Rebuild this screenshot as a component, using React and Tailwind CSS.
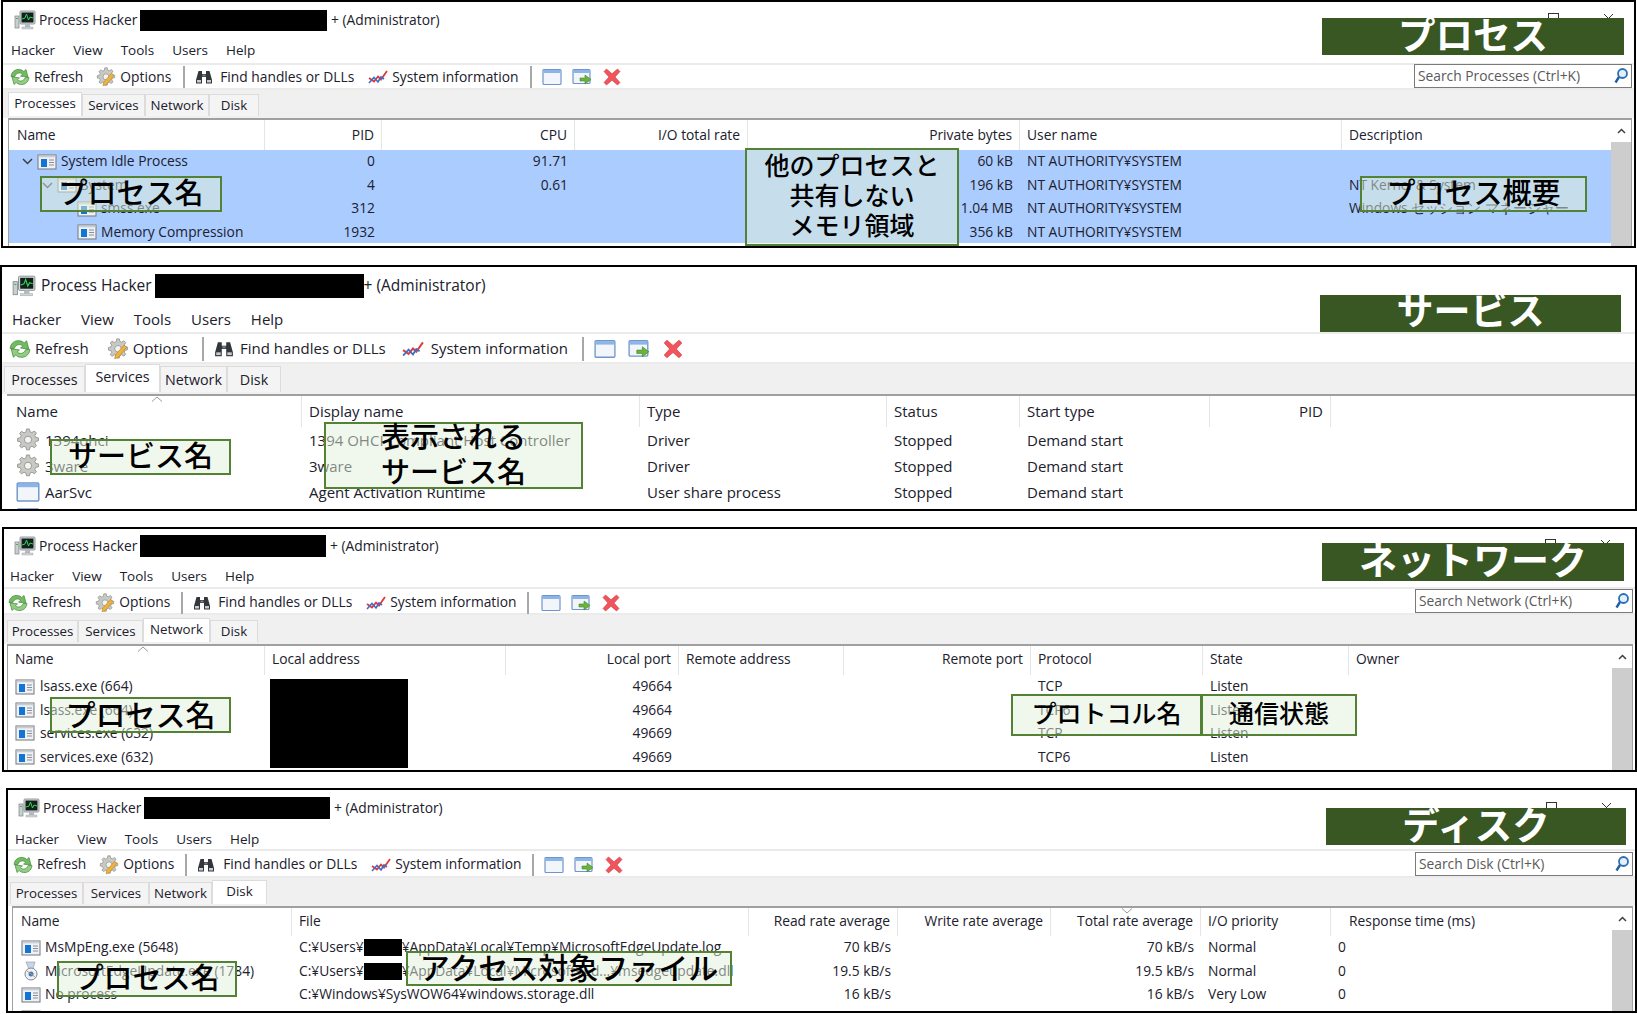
import React from "react";

const Logo = ({ s = 22 }) => (
  <svg width={s} height={s} viewBox="0 0 22 22" className="shrink-0">
    <rect x="1" y="7" width="4" height="12" fill="#c9ced0" stroke="#7d8486" strokeWidth="0.7" />
    <rect x="2" y="9" width="2" height="1" fill="#4caf50" />
    <rect x="6" y="2" width="15" height="13" rx="1" fill="#d7dcde" stroke="#7f8789" strokeWidth="0.8" />
    <rect x="7.5" y="3.5" width="12" height="10" fill="#14201c" />
    <path d="M8 10l3-1 1.5-4 2 6 1.5-3 3 1" fill="none" stroke="#35d45a" strokeWidth="1" />
    <rect x="11" y="15" width="5" height="3" fill="#b5babc" />
    <rect x="8" y="18" width="11" height="2" fill="#d0d4d6" stroke="#9a9fa1" strokeWidth="0.4" />
  </svg>
);

const Refresh = ({ s = 20 }) => (
  <svg width={s} height={s} viewBox="0 0 20 20" className="shrink-0">
    <path d="M1 9.500C1.500 4.500 5.500 2 9.500 2.500c2 .2 3.300 1 4.300 2L16 2.500l2 7.500-7.500-.8 2-2C11 5.500 6.500 5 4.800 9.500z" fill="#74ba60" stroke="#3f8a3c" strokeWidth="0.7" />
    <path d="M19 10.500c-.5 5-4.500 7.500-8.500 7-2-.2-3.300-1-4.300-2L4 17.500 2 10l7.500.8-2 2c1.500 1.700 6 2.200 7.700-2.300z" fill="#93cd80" stroke="#3f8a3c" strokeWidth="0.7" />
  </svg>
);

const GearShape = () => (
  <g>
    <path
      d="M8.800.8h2.400l.5 2.300 1.600.7 2-1.300 1.700 1.700-1.300 2 .7 1.600 2.300.5v2.400l-2.300.5-.7 1.600 1.300 2-1.700 1.700-2-1.300-1.600.7-.5 2.300H8.800l-.5-2.300-1.600-.7-2 1.300L3 15.100l1.300-2-.7-1.600-2.300-.5V8.600l2.300-.5.7-1.600-1.300-2L4.700 2.800l2 1.300 1.600-.7z"
      fill="#c8c8c4"
      stroke="#8e8e88"
      strokeWidth="0.7"
    />
    <circle cx="10" cy="9.800" r="3" fill="#f4f4f2" stroke="#8e8e88" strokeWidth="0.7" />
  </g>
);

const Options = ({ s = 20 }) => (
  <svg width={s} height={s} viewBox="0 0 20 20" className="shrink-0">
    <GearShape />
    <path d="M15.500 6.500l2.500 1.800-7.500 9.200-3.500 1.300.6-3.500z" fill="#eeb23e" stroke="#bd8320" strokeWidth="0.6" />
  </svg>
);

const ServiceGear = ({ s = 24 }) => (
  <svg width={s} height={s} viewBox="0 0 20 20" className="shrink-0">
    <GearShape />
  </svg>
);

const Binoculars = ({ s = 18 }) => (
  <svg width={s} height={s} viewBox="0 0 18 18" className="shrink-0">
    <path d="M3.500 3h3.500v3h4V3h3.500l2.500 9v3.500h-6V9H7v6.500H1V12z" fill="#33373c" />
    <rect x="2" y="12" width="4" height="2.500" fill="#c7ccd0" />
    <rect x="12" y="12" width="4" height="2.500" fill="#c7ccd0" />
    <rect x="7.500" y="6.500" width="3" height="2" fill="#7b8086" />
  </svg>
);

const Chart = ({ s = 20 }) => (
  <svg width={s} height={s} viewBox="0 0 20 20" className="shrink-0">
    <path d="M1 11l5 3.500 4-5 3 3L19 4" fill="none" stroke="#e53935" strokeWidth="1.800" />
    <path d="M1 16l5-5.500 4 4.500 3-5 3 2" fill="none" stroke="#3f6fc4" strokeWidth="1.600" />
  </svg>
);

const Win = ({ s = 20 }) => (
  <svg width={s} height={s} viewBox="0 0 20 20" className="shrink-0">
    <rect x="1" y="2.500" width="18" height="15" rx="1" fill="#f2f6fb" stroke="#6f96cc" strokeWidth="1.200" />
    <rect x="1.500" y="3" width="17" height="3" fill="#8db4e6" />
  </svg>
);

const WinArrow = ({ s = 20 }) => (
  <svg width={s} height={s} viewBox="0 0 20 20" className="shrink-0">
    <rect x="1" y="2.500" width="17" height="14" rx="1" fill="#f2f6fb" stroke="#6f96cc" strokeWidth="1.200" />
    <rect x="1.500" y="3" width="16" height="3" fill="#8db4e6" />
    <path d="M8 11h5V8l6 4.500-6 4.500v-3H8z" fill="#6cb23c" stroke="#3f8a25" strokeWidth="0.6" />
  </svg>
);

const Close = ({ s = 20 }) => (
  <svg width={s} height={s} viewBox="0 0 20 20" className="shrink-0">
    <path d="M2 4.500L4.500 2 10 6.800 15.500 2 18 4.500 13 10l5 5.500-2.500 2.500L10 13.200 4.500 18 2 15.500 7 10z" fill="#f0545c" stroke="#d9363e" strokeWidth="0.6" />
  </svg>
);

const Search = () => (
  <svg width="16" height="18" viewBox="0 0 16 18" className="shrink-0">
    <circle cx="9.500" cy="6.500" r="4.500" fill="#e3f0fb" stroke="#2a6fb5" strokeWidth="1.800" />
    <path d="M6 10l-3.500 5.500" stroke="#1d5f9f" strokeWidth="2.400" />
  </svg>
);

const Proc = ({ s = 20 }) => (
  <svg width={s} height={s} viewBox="0 0 20 20" className="shrink-0">
    <rect x="1" y="3" width="18" height="14" fill="#eef1f5" stroke="#7d8085" strokeWidth="1.100" />
    <rect x="1.500" y="3.500" width="17" height="1.800" fill="#c9cdd2" />
    <rect x="4" y="7" width="6" height="8" fill="#1474d4" />
    <path d="M12 8h5M12 10.500h5M12 13h5" stroke="#8b8f95" strokeWidth="1" />
  </svg>
);

const Installer = ({ s = 20 }) => (
  <svg width={s} height={s} viewBox="0 0 20 20" className="shrink-0">
    <path d="M5 1h9l-2 7h-4z" fill="#c9d5e6" stroke="#8a95a5" strokeWidth="0.6" />
    <circle cx="10" cy="13" r="6" fill="#eef2f8" stroke="#7d8899" strokeWidth="1" />
    <circle cx="10" cy="13" r="2.500" fill="#3b78d0" />
    <path d="M6 10l8 6" stroke="#d99a2b" strokeWidth="1" />
  </svg>
);

const Chevron = ({ className }) => (
  <svg width="11" height="7" viewBox="0 0 11 7" className={className}>
    <path d="M1 1l4.500 4.500L10 1" fill="none" stroke="#3d3d3d" strokeWidth="1.500" />
  </svg>
);

const SortUp = ({ className }) => (
  <svg width="12" height="6" viewBox="0 0 12 6" className={className}>
    <path d="M1 5.500L6 1l5 4.500" fill="none" stroke="#9a9a9a" strokeWidth="1" />
  </svg>
);

const Scrollbar = () => (
  <div className="w-[20px] shrink-0 flex flex-col">
    <div className="h-[22px] flex items-center justify-center bg-white">
      <svg width="9" height="6" viewBox="0 0 9 6">
        <path d="M1 5l3.500-3.500L8 5" fill="none" stroke="#404040" strokeWidth="1.500" />
      </svg>
    </div>
    <div className="flex-1 bg-[#cdcdcd]" />
  </div>
);

const Note = ({ className, children }) => (
  <div
    className={`absolute flex flex-col items-center justify-center text-center border-2 border-[#548235] bg-[#e2efd9]/50 text-black font-medium leading-none pb-[5px] whitespace-nowrap font-['Noto_Sans_CJK_JP',sans-serif] ${className}`}
  >
    {children}
  </div>
);

const Heading = ({ className, children }) => (
  <div
    className={`absolute flex items-center justify-center bg-[#385723] text-white font-bold leading-none pb-[8px] whitespace-nowrap font-['Noto_Sans_CJK_JP',sans-serif] ${className}`}
  >
    {children}
  </div>
);

const TABS = ["Processes", "Services", "Network", "Disk"];

function Panel({ p }) {
  const bodyRight = p.rightBody || p.right;
  return (
    <section className={`relative border-2 border-black bg-white flex flex-col overflow-hidden text-[#20202c] font-['Open_Sans',sans-serif] ${p.shell} ${p.text}`}>
      <div className={`flex items-center shrink-0 ${p.titleRow}`}>
        <Logo s={p.logo} />
        <span className={p.titleName}>Process Hacker</span>
        <span className={`bg-black shrink-0 ${p.redact}`} />
        <span className="whitespace-pre">{p.titleTail}</span>
        {p.winButtons && (
          <div className={`ml-auto flex items-start self-start ${p.winButtons}`}>
            <span className="w-[11px] h-[11px] border border-[#333]" />
            <svg width="11" height="11" viewBox="0 0 11 11" className="ml-[44px]">
              <path d="M1 1l9 9M10 1l-9 9" stroke="#333" strokeWidth="1" />
            </svg>
          </div>
        )}
      </div>
      <div className={`flex items-center shrink-0 ${p.menuRow}`}>
        {["Hacker", "View", "Tools", "Users", "Help"].map((m) => (
          <span key={m}>{m}</span>
        ))}
      </div>
      <div className={`flex items-center shrink-0 border-t-2 border-b-2 border-[#ebebeb] ${p.toolbar}`}>
        <div className={`flex items-center ${p.tbIconGap}`}><Refresh s={p.icon} /><span>Refresh</span></div>
        <div className={`flex items-center ${p.tbIconGap} ${p.tbGapOptions}`}><Options s={p.icon} /><span>Options</span></div>
        <span className={`w-[2px] bg-[#a8a8a8] self-center ${p.tbSep} ${p.tbSepH}`} />
        <div className={`flex items-center ${p.tbBinGap}`}><Binoculars s={p.binIcon} /><span>Find handles or DLLs</span></div>
        <div className={`flex items-center ${p.tbChartGap} ${p.tbGapSys}`}><Chart s={p.icon} /><span>System information</span></div>
        <span className={`w-[2px] bg-[#a8a8a8] self-center ${p.tbSep} ${p.tbSepH}`} />
        <div className={`flex items-center ${p.tbWinGap}`}><Win s={p.icon} /><WinArrow s={p.icon} /><Close s={p.icon} /></div>
        {p.search && (
          <div className={`ml-auto h-[24px] self-end flex items-center justify-between border border-[#7a7a7a] bg-white pl-[3px] pr-[2px] text-[#5a5a5a] ${p.searchBox}`}>
            <span>{p.search}</span>
            <Search />
          </div>
        )}
      </div>
      <div className={`flex items-end shrink-0 bg-[#f0f0f0] pb-[2px] ${p.tabsRow}`}>
        {TABS.map((t) =>
          t === p.active ? (
            <div key={t} className={`flex items-start justify-center bg-white border-t border-x border-[#dcdcdc] ${p.activeTab} ${p.tabW[t]}`}>{t}</div>
          ) : (
            <div key={t} className={`flex items-center justify-center bg-[#f4f4f4] border border-b-0 border-[#dcdcdc] ${p.tab} ${p.tabW[t]}`}>{t}</div>
          )
        )}
      </div>
      <div className={`relative flex-1 min-h-0 flex border-t-2 border-[#a0a0a0] overflow-hidden ${p.tableBox}`}>
        <div className={`flex-1 min-w-0 overflow-hidden ${p.inner}`}>
          <div className={`grid ${p.grid} ${p.headerH}`}>
            {p.columns.map((c, i) => (
              <div key={i} className={`flex items-center truncate border-r border-[#e5e5e5] last:border-r-0 px-[7px] ${p.headerCell} ${p.right.includes(i) ? "justify-end" : ""}`}>
                {c}
              </div>
            ))}
          </div>
          <div className={`${p.selected ? "bg-[#aaccff] -ml-[1px] pl-[1px]" : ""} ${p.bodyH}`}>
            {p.rows.map((r, ri) => (
              <div key={ri} className={`grid ${p.grid} ${p.rowH}`}>
                {r.cells.map((c, i) => (
                  <div key={i} className={`flex items-center whitespace-nowrap overflow-hidden ${i === 0 ? p.rowGap : "px-[7px]"} ${i === 0 ? r.indent : ""} ${bodyRight.includes(i) ? "justify-end" : ""}`}>
                    {i === 0 && r.chevron}
                    {i === 0 && r.icon}
                    {c}
                  </div>
                ))}
              </div>
            ))}
          </div>
        </div>
        {p.scroll && <Scrollbar />}
        {p.sort}
      </div>
      {p.overlays}
    </section>
  );
}

const Path = ({ tail }) => (
  <>
    <span>C:¥Users¥</span>
    <span className="inline-block shrink-0 w-[38px] h-[17px] bg-black" />
    <span>{tail}</span>
  </>
);

const sysUser = "NT AUTHORITY¥SYSTEM";

const P1 = {
  shell: "mt-0 ml-[1px] w-[1635px] h-[248px]",
  text: "text-[13.8px]",
  titleRow: "h-[36px] pl-[11px]",
  logo: 22,
  titleName: "ml-[3px] mr-[3px]",
  redact: "w-[187px] h-[21px]",
  titleTail: " + (Administrator)",
  winButtons: "mt-[11px] mr-[20px]",
  menuRow: "h-[25px] pl-[8px] gap-[18px] text-[13.5px]",
  toolbar: "h-[27px] pt-[1px] pl-[7px]",
  icon: 20,
  binIcon: 18,
  tbIconGap: "gap-[4px]",
  tbBinGap: "gap-[7px]",
  tbChartGap: "gap-[4px]",
  tbGapOptions: "ml-[13px]",
  tbGapSys: "ml-[14px]",
  tbSep: "ml-[12px] mr-[10px]",
  tbSepH: "h-[22px]",
  tbWinGap: "gap-[10px]",
  search: "Search Processes (Ctrl+K)",
  searchBox: "w-[218px] mr-[2px]",
  tabsRow: "h-[28px] pl-[5px] text-[13.3px]",
  tab: "h-[22px]",
  activeTab: "h-[24px] pt-[1px]",
  tabW: { Processes: "w-[74px]", Services: "w-[63px]", Network: "w-[64px]", Disk: "w-[50px]" },
  active: "Processes",
  tableBox: "ml-[5px] mr-[2px] border-x border-[#a0a0a0]",
  inner: "pl-[1px]",
  grid: "grid-cols-[255px_117px_193px_173px_272px_322px_269px]",
  headerH: "h-[30px]",
  headerCell: "",
  selected: true,
  bodyH: "h-[93px]",
  rowH: "h-[23.500px]",
  rowGap: "gap-[4px]",
  right: [1, 2, 3, 4],
  scroll: true,
  columns: ["Name", "PID", "CPU", "I/O total rate", "Private bytes", "User name", "Description"],
  rows: [
    { indent: "pl-[12px]", chevron: <Chevron />, icon: <Proc />, cells: ["System Idle Process", "0", "91.71", "", "60 kB", sysUser, ""] },
    { indent: "pl-[32px]", chevron: <Chevron />, icon: <Proc />, cells: ["System", "4", "0.61", "", "196 kB", sysUser, "NT Kernel & System"] },
    { indent: "pl-[67px]", icon: <Proc />, cells: ["smss.exe", "312", "", "", "1.04 MB", sysUser, "Windows セッション マネージャー"] },
    { indent: "pl-[67px]", icon: <Proc />, cells: ["Memory Compression", "1932", "", "", "356 kB", sysUser, ""] },
  ],
  overlays: (
    <>
      <Heading className="left-[1319px] top-[16px] w-[302px] h-[37px] text-[37.500px]">プロセス</Heading>
      <Note className="left-[37px] top-[174px] w-[182px] h-[36px] text-[29px]">プロセス名</Note>
      <Note className="left-[742px] top-[146px] w-[214px] h-[98px] text-[25px] gap-[5px]">
        <span>他のプロセスと</span><span>共有しない</span><span>メモリ領域</span>
      </Note>
      <Note className="left-[1357px] top-[174px] w-[227px] h-[36px] text-[29px]">プロセス概要</Note>
    </>
  ),
};

const P2 = {
  shell: "mt-[17px] ml-0 w-[1637px] h-[246px]",
  text: "text-[15px]",
  titleRow: "h-[38px] pl-[10px] text-[15.500px]",
  logo: 24,
  titleName: "ml-[5px] mr-[3px]",
  redact: "w-[209px] h-[24px]",
  titleTail: "+ (Administrator)",
  menuRow: "h-[27px] pt-[1px] pl-[10px] gap-[20px]",
  toolbar: "h-[32px] pt-[1px] pl-[7px]",
  icon: 22,
  binIcon: 20,
  tbIconGap: "gap-[4px]",
  tbBinGap: "gap-[6px]",
  tbChartGap: "gap-[7px]",
  tbGapOptions: "ml-[18px]",
  tbGapSys: "ml-[16px]",
  tbSep: "ml-[14px] mr-[10px]",
  tbSepH: "h-[24px]",
  tbWinGap: "gap-[12px]",
  tabsRow: "h-[30px] pl-[2px] text-[14.300px]",
  tab: "h-[26px]",
  activeTab: "h-[28px] pt-[1px]",
  tabW: { Processes: "w-[81px]", Services: "w-[75px]", Network: "w-[67px]", Disk: "w-[54px]" },
  active: "Services",
  tableBox: "ml-[5px]",
  inner: "pl-[2px]",
  grid: "grid-cols-[293px_338px_247px_133px_190px_121px_1fr]",
  headerH: "h-[31px]",
  headerCell: "pb-[1px]",
  bodyH: "h-[90px]",
  rowH: "h-[26px]",
  rowGap: "gap-[5px]",
  right: [5],
  columns: ["Name", "Display name", "Type", "Status", "Start type", "PID", ""],
  rows: [
    { indent: "pl-[7px]", icon: <ServiceGear />, cells: ["1394ohci", "1394 OHCI Compliant Host Controller", "Driver", "Stopped", "Demand start", "", ""] },
    { indent: "pl-[7px]", icon: <ServiceGear />, cells: ["3ware", "3ware", "Driver", "Stopped", "Demand start", "", ""] },
    { indent: "pl-[7px]", icon: <Win s={24} />, cells: ["AarSvc", "Agent Activation Runtime", "User share process", "Stopped", "Demand start", "", ""] },
    { indent: "pl-[7px]", icon: <Win s={24} />, cells: ["", "", "", "", "", "", ""] },
  ],
  sort: <SortUp className="absolute left-[144px] top-[0px]" />,
  overlays: (
    <>
      <Heading className="left-[1318px] top-[28px] w-[301px] h-[37px] text-[37px]">サービス</Heading>
      <Note className="left-[48px] top-[172px] w-[181px] h-[36px] text-[29px]">サービス名</Note>
      <Note className="left-[322px] top-[155px] w-[259px] h-[67px] text-[29px] gap-[6px]">
        <span>表示される</span><span>サービス名</span>
      </Note>
    </>
  ),
};

const P3 = {
  shell: "mt-[16px] ml-[2px] w-[1635px] h-[245px]",
  text: "text-[13.8px]",
  titleRow: "h-[34px] pl-[10px]",
  logo: 22,
  titleName: "ml-[3px] mr-[3px]",
  redact: "w-[186px] h-[22px]",
  titleTail: " + (Administrator)",
  winButtons: "mt-[10px] mr-[24px]",
  menuRow: "h-[24px] pt-[3px] pl-[6px] gap-[18px] text-[13.5px]",
  toolbar: "h-[28px] pt-[3px] pl-[4px]",
  icon: 20,
  binIcon: 18,
  tbIconGap: "gap-[4px]",
  tbBinGap: "gap-[7px]",
  tbChartGap: "gap-[4px]",
  tbGapOptions: "ml-[14px]",
  tbGapSys: "ml-[14px]",
  tbSep: "ml-[11px] mr-[10px]",
  tbSepH: "h-[22px]",
  tbWinGap: "gap-[10px] ml-[2px]",
  search: "Search Network (Ctrl+K)",
  searchBox: "w-[218px] mr-[2px]",
  tabsRow: "h-[29px] pl-[3px] text-[13.3px]",
  tab: "h-[22px]",
  activeTab: "h-[24px] pt-[1px]",
  tabW: { Processes: "w-[71px]", Services: "w-[65px]", Network: "w-[67px]", Disk: "w-[48px]" },
  active: "Network",
  tableBox: "ml-[3px] mr-[2px] border-x border-[#a0a0a0]",
  inner: "pl-0",
  grid: "grid-cols-[257px_241px_173px_165px_187px_172px_146px_157px]",
  headerH: "h-[29px]",
  headerCell: "pb-[3px]",
  bodyH: "h-[94px]",
  rowH: "h-[23.400px]",
  rowGap: "gap-[5px]",
  right: [2, 4],
  scroll: true,
  columns: ["Name", "Local address", "Local port", "Remote address", "Remote port", "Protocol", "State", "Owner"],
  rows: [
    { indent: "pl-[7px]", icon: <Proc />, cells: ["lsass.exe (664)", "", "49664", "", "", "TCP", "Listen", ""] },
    { indent: "pl-[7px]", icon: <Proc />, cells: ["lsass.exe (664)", "", "49664", "", "", "TCP6", "Listen", ""] },
    { indent: "pl-[7px]", icon: <Proc />, cells: ["services.exe (632)", "", "49669", "", "", "TCP", "Listen", ""] },
    { indent: "pl-[7px]", icon: <Proc />, cells: ["services.exe (632)", "", "49669", "", "", "TCP6", "Listen", ""] },
  ],
  sort: <SortUp className="absolute left-[129px] top-[0px]" />,
  overlays: (
    <>
      <Heading className="left-[1318px] top-[14px] w-[302px] h-[38px] text-[38px]">ネットワーク</Heading>
      <Note className="left-[46px] top-[168px] w-[181px] h-[36px] text-[30px]">プロセス名</Note>
      <div className="absolute left-[266px] top-[150px] w-[138px] h-[89px] bg-black" />
      <Note className="left-[1007px] top-[165px] w-[191px] h-[42px] text-[25px]">プロトコル名</Note>
      <Note className="left-[1197px] top-[165px] w-[156px] h-[42px] text-[25px]">通信状態</Note>
    </>
  ),
};

const P4 = {
  shell: "mt-[16px] ml-[6px] w-[1631px] h-[225px]",
  text: "text-[13.8px]",
  titleRow: "h-[36px] pl-[10px]",
  logo: 22,
  titleName: "ml-[3px] mr-[3px]",
  redact: "w-[186px] h-[22px]",
  titleTail: " + (Administrator)",
  winButtons: "mt-[12px] mr-[23px]",
  menuRow: "h-[23px] pt-[3px] pl-[7px] gap-[18px] text-[13.5px]",
  toolbar: "h-[29px] pt-[2px] pl-[5px]",
  icon: 20,
  binIcon: 18,
  tbIconGap: "gap-[4px]",
  tbBinGap: "gap-[8px]",
  tbChartGap: "gap-[4px]",
  tbGapOptions: "ml-[13px]",
  tbGapSys: "ml-[14px]",
  tbSep: "ml-[11px] mr-[10px]",
  tbSepH: "h-[22px]",
  tbWinGap: "gap-[10px]",
  search: "Search Disk (Ctrl+K)",
  searchBox: "w-[218px] mr-[2px]",
  tabsRow: "h-[28px] pl-[2px] text-[13.3px]",
  tab: "h-[22px]",
  activeTab: "h-[24px] pt-[1px]",
  tabW: { Processes: "w-[73px]", Services: "w-[66px]", Network: "w-[63px]", Disk: "w-[55px]" },
  active: "Disk",
  tableBox: "ml-[4px] mr-[2px] border-x border-[#a0a0a0]",
  inner: "pl-[1px]",
  grid: "grid-cols-[278px_457px_149px_153px_150px_130px_151px]",
  headerH: "h-[28px]",
  headerCell: "pb-[1px]",
  bodyH: "h-[94px]",
  rowH: "h-[23.500px]",
  rowGap: "gap-[4px]",
  right: [2, 3, 4, 6],
  rightBody: [2, 3, 4],
  scroll: true,
  columns: ["Name", "File", "Read rate average", "Write rate average", "Total rate average", "I/O priority", "Response time (ms)"],
  rows: [
    { indent: "pl-[7px]", icon: <Proc />, cells: ["MsMpEng.exe (5648)", <Path key="a" tail="¥AppData¥Local¥Temp¥MicrosoftEdgeUpdate.log" />, "70 kB/s", "", "70 kB/s", "Normal", "0"] },
    { indent: "pl-[7px]", icon: <Installer />, cells: ["MicrosoftEdgeUpdate.exe (1784)", <Path key="b" tail="¥AppData¥Local¥Microsoft¥Ed...¥msedgeupdate.dll" />, "19.5 kB/s", "", "19.5 kB/s", "Normal", "0"] },
    { indent: "pl-[7px]", icon: <Proc />, cells: ["No process", "C:¥Windows¥SysWOW64¥windows.storage.dll", "16 kB/s", "", "16 kB/s", "Very Low", "0"] },
    { indent: "pl-[7px]", icon: <Proc />, cells: ["", "", "", "", "", "", ""] },
  ],
  sort: <svg width="12" height="6" viewBox="0 0 12 6" className="absolute left-[1108px] top-[0px]"><path d="M1 .5L6 5l5-4.500" fill="none" stroke="#9a9a9a" strokeWidth="1" /></svg>,
  overlays: (
    <>
      <Heading className="left-[1318px] top-[18px] w-[300px] h-[37px] text-[37.500px]">ディスク</Heading>
      <Note className="left-[49px] top-[171px] w-[180px] h-[36px] text-[29px]">プロセス名</Note>
      <Note className="left-[398px] top-[161px] w-[326px] h-[35px] text-[30px]">アクセス対象ファイル</Note>
    </>
  ),
};

export default function App() {
  return (
    <div className="w-[1637px] h-[1014px] bg-white overflow-hidden">
      <Panel p={P1} />
      <Panel p={P2} />
      <Panel p={P3} />
      <Panel p={P4} />
    </div>
  );
}
